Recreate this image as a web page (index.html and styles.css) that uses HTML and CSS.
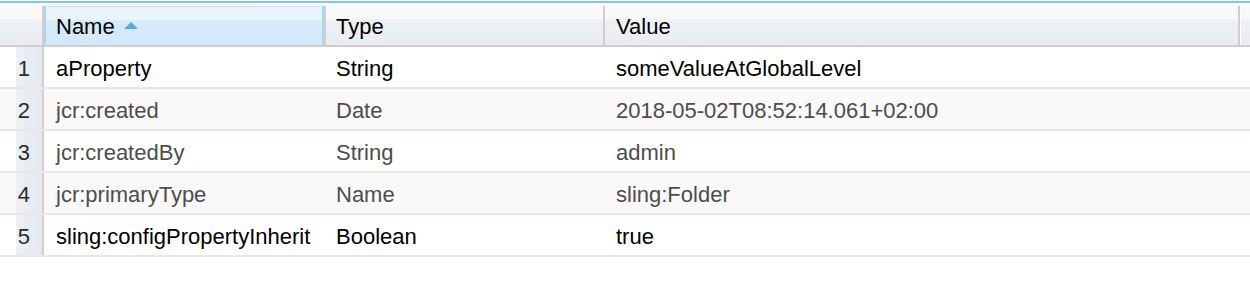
FILE: index.html
```html
<!DOCTYPE html>
<html lang="en">
<head>
    <meta charset="UTF-8">
    <title>Properties</title>
    <link rel="stylesheet" href="styles.css">
</head>
<body>
    <div class="grid">
        <div class="grid-header">
            <div class="hcell corner"></div>
            <div class="hcell col-name sorted">Name <span class="sort-arrow"></span></div>
            <div class="hcell col-type">Type</div>
            <div class="hcell col-value">Value</div>
            <div class="hcell filler"></div>
        </div>

        <div class="grid-row">
            <div class="cell rownum">1</div>
            <div class="cell col-name">aProperty</div>
            <div class="cell col-type">String</div>
            <div class="cell col-value">someValueAtGlobalLevel</div>
        </div>
        <div class="grid-row alt muted">
            <div class="cell rownum">2</div>
            <div class="cell col-name">jcr:created</div>
            <div class="cell col-type">Date</div>
            <div class="cell col-value">2018-05-02T08:52:14.061+02:00</div>
        </div>
        <div class="grid-row muted">
            <div class="cell rownum">3</div>
            <div class="cell col-name">jcr:createdBy</div>
            <div class="cell col-type">String</div>
            <div class="cell col-value">admin</div>
        </div>
        <div class="grid-row alt muted">
            <div class="cell rownum">4</div>
            <div class="cell col-name">jcr:primaryType</div>
            <div class="cell col-type">Name</div>
            <div class="cell col-value">sling:Folder</div>
        </div>
        <div class="grid-row">
            <div class="cell rownum">5</div>
            <div class="cell col-name">sling:configPropertyInherit</div>
            <div class="cell col-type">Boolean</div>
            <div class="cell col-value">true</div>
        </div>
    </div>
</body>
</html>
```

FILE: styles.css
```css
:root {
    --divider: #d9cbcc;
    --row-line: #ece5e6;
    --alt-row: #faf8f8;
    --muted-text: #4d4d4d;
    --accent: #84c5ef;
}

* {
    margin: 0;
    padding: 0;
    box-sizing: border-box;
}

body {
    font-family: 'Liberation Sans', Arial, sans-serif;
    font-size: 22px;
    color: #000;
    background-color: #fff;
}

.grid {
    margin-top: 1px;
    border-top: 2px solid var(--accent);
}

.grid-header,
.grid-row {
    display: grid;
    grid-template-columns: 44px 282px 279px 635px 1fr;
}

.grid-header {
    height: 44px;
    background: linear-gradient(#faf8f8 0, #faf8f8 38%, #edf0f5 40%, #e9ecf1 100%);
    border-bottom: 2px solid var(--divider);
}

.hcell {
    margin-top: 3px;
    display: flex;
    align-items: center;
    padding-top: 3px;
    border-right: 2px solid var(--divider);
}

.hcell.filler {
    border-right: none;
    border-left: 1px solid #fff;
    margin-top: 0;
}

.hcell.sorted {
    background: linear-gradient(#eaf5fd 0, #e8f4fd 36%, #d6eafa 38%, #d3e8f9 100%);
    box-shadow: inset 2px 0 0 #abd5f4, inset -2px 0 0 #abd5f4, inset 0 1px 0 #c6e3f8;
}

.col-name {
    padding-left: 12px;
}

.col-type {
    padding-left: 10px;
}

.col-value {
    padding-left: 11px;
}

.sort-arrow {
    width: 0;
    height: 0;
    margin-left: 9px;
    margin-top: -4px;
    border-left: 7px solid transparent;
    border-right: 7px solid transparent;
    border-bottom: 7px solid #5aa8e2;
}

.grid-row {
    height: 42px;
    border-bottom: 2px solid var(--row-line);
}

.grid-row.alt {
    background-color: var(--alt-row);
}

.grid-row.muted {
    color: var(--muted-text);
}

.cell {
    display: flex;
    align-items: center;
    padding-top: 3px;
    white-space: nowrap;
}

.rownum {
    justify-content: flex-end;
    padding-right: 12px;
    color: #2b2b2b;
    background: linear-gradient(to right, transparent 16px, #edf0f5 16px, #e4e9f0 42px);
    border-right: 2px solid #d6cdd0;
}
```
